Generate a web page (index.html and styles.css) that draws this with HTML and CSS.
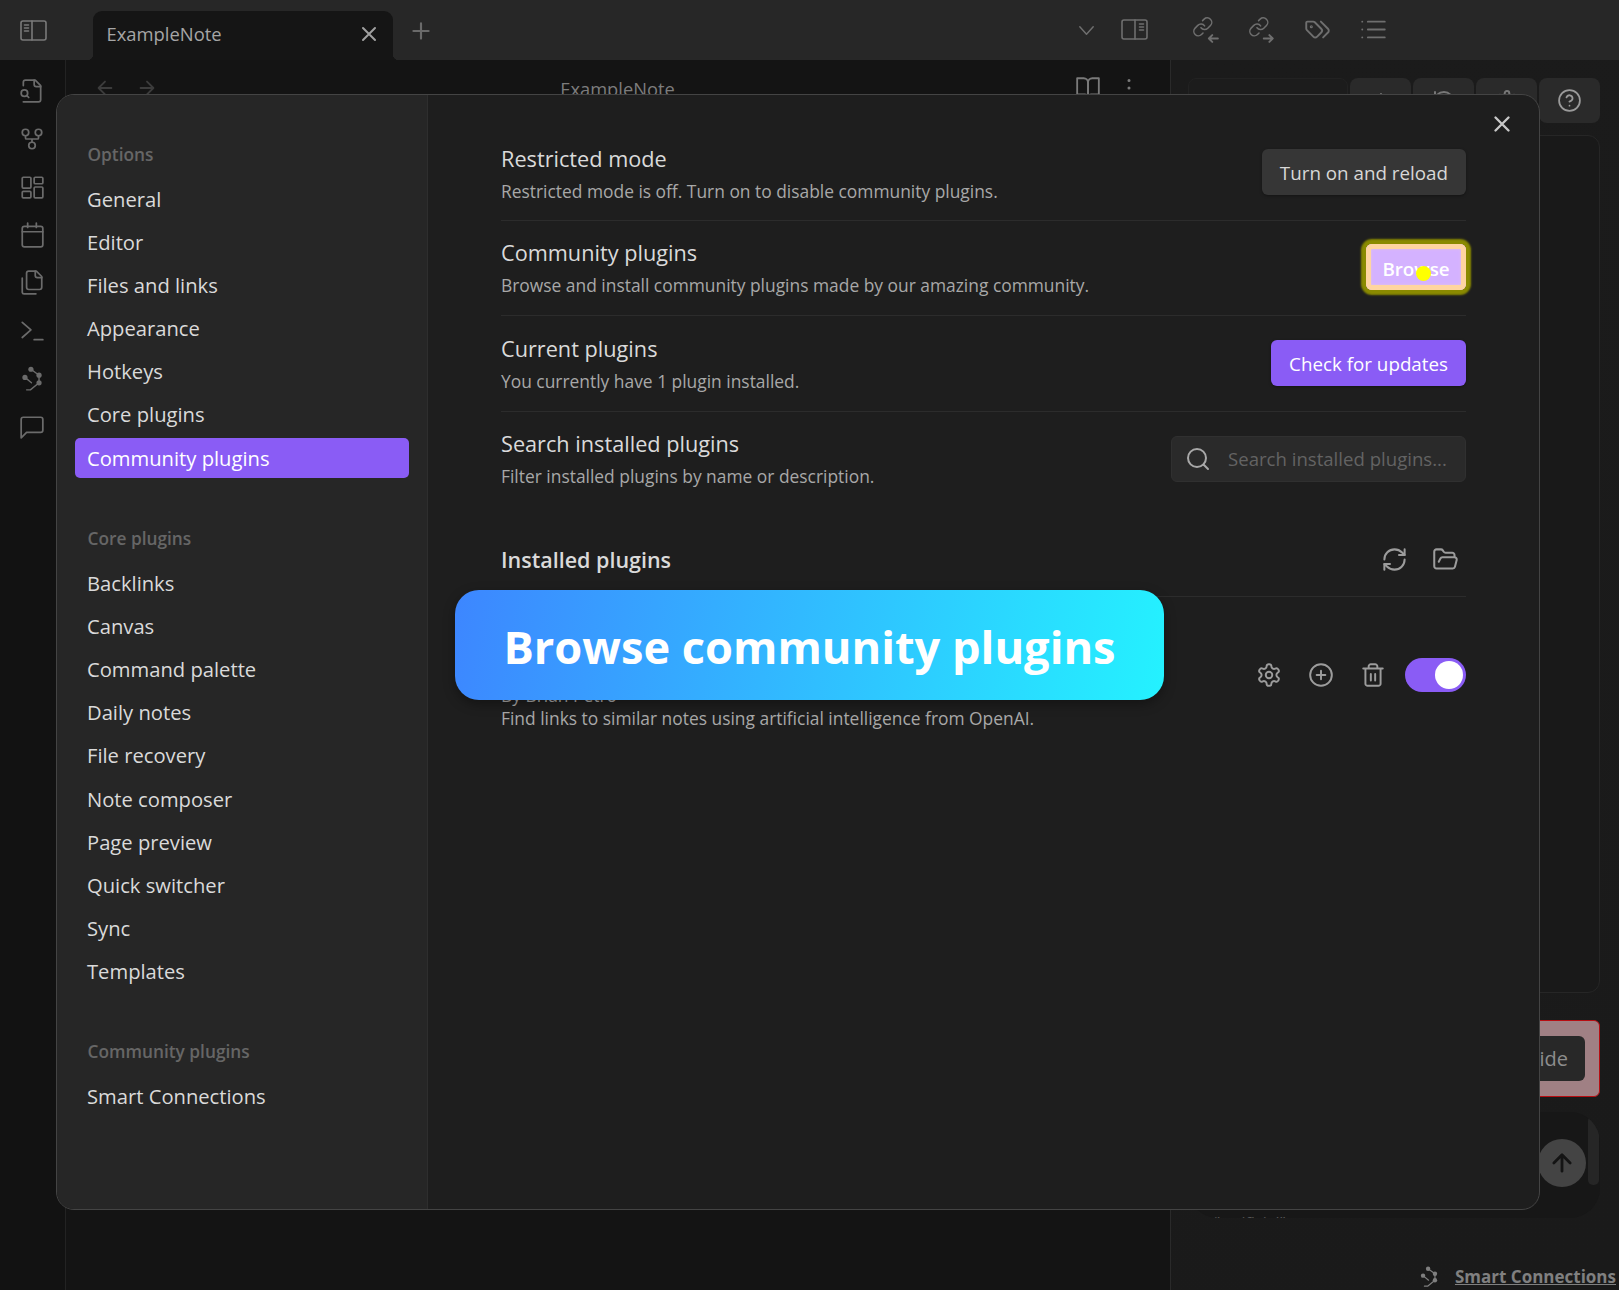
FILE: index.html
```html
<!DOCTYPE html>
<html lang="en">
<head>
<meta charset="utf-8">
<title>ExampleNote</title>
<link rel="stylesheet" href="styles.css">
</head>
<body>
<svg class="defs" aria-hidden="true">
  <defs>
    <symbol id="i-x" viewBox="0 0 24 24"><path d="M18 6 6 18M6 6l12 12"/></symbol>
    <symbol id="i-plus" viewBox="0 0 24 24"><path d="M5 12h14M12 5v14"/></symbol>
    <symbol id="i-graph" viewBox="0 0 24 24"><path d="M11 3 18.500 8.500v7L10.500 22H7M5.500 10.500l6 5"/><circle class="node-dot" cx="11" cy="3" r="2.400"/><circle class="node-dot" cx="18.500" cy="8.500" r="2.400"/><circle class="node-dot" cx="18.500" cy="15.500" r="2.400"/><circle class="node-dot" cx="5.500" cy="10.500" r="2.400"/></symbol>
    <symbol id="i-gear" viewBox="0 0 24 24"><path d="M12.220 2h-.44a2 2 0 0 0-2 2v.18a2 2 0 0 1-1 1.730l-.43.25a2 2 0 0 1-2 0l-.15-.08a2 2 0 0 0-2.730.73l-.22.38a2 2 0 0 0 .73 2.730l.15.1a2 2 0 0 1 1 1.720v.51a2 2 0 0 1-1 1.740l-.15.09a2 2 0 0 0-.73 2.730l.22.38a2 2 0 0 0 2.730.73l.15-.08a2 2 0 0 1 2 0l.43.25a2 2 0 0 1 1 1.730V20a2 2 0 0 0 2 2h.44a2 2 0 0 0 2-2v-.18a2 2 0 0 1 1-1.730l.43-.25a2 2 0 0 1 2 0l.15.08a2 2 0 0 0 2.730-.73l.22-.39a2 2 0 0 0-.73-2.730l-.15-.08a2 2 0 0 1-1-1.740v-.5a2 2 0 0 1 1-1.740l.15-.09a2 2 0 0 0 .73-2.730l-.22-.38a2 2 0 0 0-2.730-.73l-.15.08a2 2 0 0 1-2 0l-.43-.25a2 2 0 0 1-1-1.730V4a2 2 0 0 0-2-2z"/><circle cx="12" cy="12" r="3"/></symbol>
  </defs>
</svg>

<div class="app">
  <header class="topbar">
    <div class="top-left">
      <svg class="ic ic-sidebar" viewBox="0 0 27 21"><rect x="1" y="1" width="25" height="19" rx="2"/><path d="M12 1v19M4.500 5h4M4.500 8h4M4.500 11h4"/></svg>
    </div>
    <div class="tab">
      <span class="tab-title">ExampleNote</span>
      <svg class="ic ic-tabx"><use href="#i-x"/></svg>
    </div>
    <svg class="ic ic-newtab"><use href="#i-plus"/></svg>
    <div class="top-right">
      <svg class="ic ic-chev" viewBox="0 0 24 24"><path d="m5 8 7 8 7-8"/></svg>
      <svg class="ic ic-sidebar right-toggle" viewBox="0 0 27 21"><rect x="1" y="1" width="25" height="19" rx="2"/><path d="M14 1v19M18.500 5h4M18.500 8h4M18.500 11h4"/></svg>
      <div class="side-tabs">
        <svg class="ic ic-side" viewBox="0 0 24 24"><g transform="scale(.8)"><path d="M10 13a5 5 0 0 0 7.540.54l3-3a5 5 0 0 0-7.070-7.070l-1.720 1.710"/><path d="M14 11a5 5 0 0 0-7.540-.54l-3 3a5 5 0 0 0 7.070 7.070l1.710-1.710"/></g><path d="M23 20h-8m3-3-3 3 3 3"/></svg>
        <svg class="ic ic-side" viewBox="0 0 24 24"><g transform="scale(.8)"><path d="M10 13a5 5 0 0 0 7.540.54l3-3a5 5 0 0 0-7.070-7.070l-1.720 1.710"/><path d="M14 11a5 5 0 0 0-7.540-.54l-3 3a5 5 0 0 0 7.070 7.070l1.710-1.710"/></g><path d="M14 20h8m-3-3 3 3-3 3"/></svg>
        <svg class="ic ic-side" viewBox="0 0 24 24"><path d="m15 5 6.300 6.300a2.400 2.400 0 0 1 0 3.400L17 19"/><path d="M9.586 5.586A2 2 0 0 0 8.172 5H3a1 1 0 0 0-1 1v5.172a2 2 0 0 0 .586 1.414L8.290 18.290a2.426 2.426 0 0 0 3.420 0l3.580-3.580a2.426 2.426 0 0 0 0-3.420z"/><circle cx="6.500" cy="9.500" r=".5"/></svg>
        <svg class="ic ic-side" viewBox="0 0 24 24"><path d="M7 5h15M7 12h15M7 19h15M2 5h.01M2 12h.01M2 19h.01"/></svg>
      </div>
    </div>
  </header>

  <div class="workspace">
    <nav class="ribbon">
      <svg class="ic ic-rib" viewBox="0 0 24 24"><path d="M4 22h14a2 2 0 0 0 2-2V7l-5-5H6a2 2 0 0 0-2 2v3"/><path d="M14 2v4a2 2 0 0 0 2 2h4"/><path d="M5 17a3 3 0 1 0 0-6 3 3 0 0 0 0 6z"/><path d="m9 18-1.500-1.500"/></svg>
      <svg class="ic ic-rib" viewBox="0 0 24 24"><circle cx="12" cy="18" r="3"/><circle cx="6" cy="6" r="3"/><circle cx="18" cy="6" r="3"/><path d="M18 9v2c0 .6-.4 1-1 1H7c-.6 0-1-.4-1-1V9M12 12v3"/></svg>
      <svg class="ic ic-rib" viewBox="0 0 24 24"><rect x="3" y="3" width="8" height="10" rx="1"/><rect x="14" y="3" width="8" height="6" rx="1"/><rect x="14" y="12" width="8" height="10" rx="1"/><rect x="3" y="16" width="8" height="6" rx="1"/></svg>
      <svg class="ic ic-rib" viewBox="0 0 24 24"><rect x="3" y="4" width="19" height="19" rx="2"/><path d="M16 1v4M8 1v4M3 9h19"/></svg>
      <svg class="ic ic-rib" viewBox="0 0 24 24"><path d="M21 7h-4a2 2 0 0 1-2-2V1"/><path d="M9 18a2 2 0 0 1-2-2V3a2 2 0 0 1 2-2h7l5 5v10a2 2 0 0 1-2 2Z"/><path d="M3 7.600v13A1.600 1.600 0 0 0 4.600 22h11"/></svg>
      <svg class="ic ic-rib" viewBox="0 0 24 24"><path d="m3 4 8 7-8 7M14 20h8"/></svg>
      <svg class="ic ic-rib ic-graph"><use href="#i-graph"/></svg>
      <svg class="ic ic-rib" viewBox="0 0 24 24"><path d="M22 15a2 2 0 0 1-2 2H7l-5 5V5a2 2 0 0 1 2-2h16a2 2 0 0 1 2 2z"/></svg>
    </nav>

    <main class="note">
      <div class="note-head">
        <div class="note-nav">
          <svg class="ic ic-nav" viewBox="0 0 24 24"><path d="m12 19-7-7 7-7M19 12H5"/></svg>
          <svg class="ic ic-nav" viewBox="0 0 24 24"><path d="M5 12h14M12 5l7 7-7 7"/></svg>
        </div>
        <span class="note-title">ExampleNote</span>
        <div class="note-actions">
          <svg class="ic ic-note" viewBox="0 0 24 24"><path d="M2 3h6a4 4 0 0 1 4 4v14a3 3 0 0 0-3-3H2z"/><path d="M22 3h-6a4 4 0 0 0-4 4v14a3 3 0 0 1 3-3h7z"/></svg>
          <svg class="ic ic-note ic-dots" viewBox="0 0 24 24"><path d="M12 5h.01M12 12h.01M12 19h.01"/></svg>
        </div>
      </div>
    </main>

    <aside class="side">
      <div class="side-tools">
        <div class="side-field"></div>
        <div class="side-btn"><svg class="ic ic-tool"><use href="#i-plus"/></svg></div>
        <div class="side-btn"><svg class="ic ic-tool" viewBox="0 0 24 24"><path d="M3 12a9 9 0 1 0 9-9 9.750 9.750 0 0 0-6.740 2.740L3 8M3 3v5h5"/></svg></div>
        <div class="side-btn"><svg class="ic ic-tool"><use href="#i-gear"/></svg></div>
        <div class="side-btn"><svg class="ic ic-help" viewBox="0 0 24 24"><circle cx="12" cy="12" r="10"/><path d="M9.090 9a3 3 0 0 1 5.830 1c0 2-3 3-3 3M12 17h.01"/></svg></div>
      </div>
      <div class="side-panel"></div>
      <div class="side-alert"><button class="side-hide">Hide</button></div>
      <div class="chat">
        <p class="chat-hint">"artificial"</p>
        <div class="chat-send"><svg class="ic ic-send" viewBox="0 0 24 24"><path d="m5 12 7-7 7 7M12 19V5"/></svg></div>
        <div class="chat-scroll"></div>
      </div>
      <div class="side-foot">
        <svg class="ic ic-foot"><use href="#i-graph"/></svg>
        <a class="foot-link">Smart Connections</a>
      </div>
    </aside>
  </div>
</div>

<section class="modal">
  <aside class="m-side">
    <h3 class="m-group">Options</h3>
    <ul class="m-list">
      <li class="m-item">General</li>
      <li class="m-item">Editor</li>
      <li class="m-item">Files and links</li>
      <li class="m-item">Appearance</li>
      <li class="m-item">Hotkeys</li>
      <li class="m-item">Core plugins</li>
      <li class="m-item is-active">Community plugins</li>
    </ul>
    <h3 class="m-group">Core plugins</h3>
    <ul class="m-list">
      <li class="m-item">Backlinks</li>
      <li class="m-item">Canvas</li>
      <li class="m-item">Command palette</li>
      <li class="m-item">Daily notes</li>
      <li class="m-item">File recovery</li>
      <li class="m-item">Note composer</li>
      <li class="m-item">Page preview</li>
      <li class="m-item">Quick switcher</li>
      <li class="m-item">Sync</li>
      <li class="m-item">Templates</li>
    </ul>
    <h3 class="m-group">Community plugins</h3>
    <ul class="m-list">
      <li class="m-item">Smart Connections</li>
    </ul>
  </aside>

  <div class="m-body">
    <svg class="ic ic-close"><use href="#i-x"/></svg>

    <div class="row">
      <div class="row-info">
        <div class="row-title">Restricted mode</div>
        <div class="row-desc">Restricted mode is off. Turn on to disable community plugins.</div>
      </div>
      <button class="btn">Turn on and reload</button>
    </div>
    <div class="row">
      <div class="row-info row-info-up">
        <div class="row-title">Community plugins</div>
        <div class="row-desc">Browse and install community plugins made by our amazing community.</div>
      </div>
      <button class="btn btn-browse">Browse<span class="cursor-dot"></span></button>
    </div>
    <div class="row">
      <div class="row-info row-info-up3">
        <div class="row-title">Current plugins</div>
        <div class="row-desc">You currently have 1 plugin installed.</div>
      </div>
      <button class="btn btn-cta">Check for updates</button>
    </div>
    <div class="row row-plain">
      <div class="row-info row-info-up2">
        <div class="row-title">Search installed plugins</div>
        <div class="row-desc">Filter installed plugins by name or description.</div>
      </div>
      <div class="search">
        <svg class="ic ic-search" viewBox="0 0 24 24"><circle cx="11" cy="11" r="9"/><path d="m22 22-4.500-4.500"/></svg>
        <span class="search-ph">Search installed plugins...</span>
      </div>
    </div>

    <div class="heading">
      <span class="heading-title">Installed plugins</span>
      <div class="heading-icons">
        <svg class="ic ic-act" viewBox="0 0 24 24"><path d="M3 12a9 9 0 0 1 9-9 9.750 9.750 0 0 1 6.740 2.740L21 8"/><path d="M21 3v5h-5"/><path d="M21 12a9 9 0 0 1-9 9 9.750 9.750 0 0 1-6.740-2.740L3 16"/><path d="M8 16H3v5"/></svg>
        <svg class="ic ic-act" viewBox="0 0 24 24"><path d="m6 14 1.500-2.900A2 2 0 0 1 9.240 10H20a2 2 0 0 1 1.940 2.500l-1.540 6a2 2 0 0 1-1.950 1.500H4a2 2 0 0 1-2-2V5a2 2 0 0 1 2-2h3.900a2 2 0 0 1 1.690.9l.81 1.200a2 2 0 0 0 1.670.9H18a2 2 0 0 1 2 2v2"/></svg>
      </div>
    </div>

    <div class="plugin">
      <div class="plugin-info">
        <div class="row-title">Smart Connections</div>
        <div class="row-desc plugin-by">By Brian Petro</div>
        <div class="row-desc">Find links to similar notes using artificial intelligence from OpenAI.</div>
      </div>
      <div class="plugin-controls">
        <svg class="ic ic-ctl"><use href="#i-gear"/></svg>
        <svg class="ic ic-ctl" viewBox="0 0 24 24"><circle cx="12" cy="12" r="10"/><path d="M8 12h8M12 8v8"/></svg>
        <svg class="ic ic-ctl" viewBox="0 0 24 24"><path d="M3 6h18M19 6v14c0 1-1 2-2 2H7c-1 0-2-1-2-2V6M8 6V4c0-1 1-2 2-2h4c1 0 2 1 2 2v2M10 11v6M14 11v6"/></svg>
        <div class="toggle"><span class="knob"></span></div>
      </div>
    </div>
  </div>
</section>

<div class="toast">Browse community plugins</div>
</body>
</html>
```

FILE: styles.css
```css
* { box-sizing: border-box; }
html, body { margin: 0; height: 100%; }
body {
  width: 1619px;
  height: 1290px;
  overflow: hidden;
  position: relative;
  background: #141414;
  font-family: "Open Sans", "Noto Sans", "Liberation Sans", sans-serif;
  font-stretch: 92%;
  color: #dadada;
}
.defs { position: absolute; width: 0; height: 0; }
.ic {
  display: block;
  fill: none;
  stroke: currentColor;
  stroke-width: 2;
  stroke-linecap: round;
  stroke-linejoin: round;
  flex: none;
}
.node-dot { fill: currentColor; stroke: none; }

.app { display: flex; flex-direction: column; height: 1290px; }

/* top bar */
.topbar {
  display: flex;
  align-items: flex-end;
  height: 60px;
  background: #272727;
  flex: none;
}
.top-left { width: 93px; height: 60px; padding: 20px 0 0 20px; color: #7a7a7a; }
.ic-sidebar { width: 27px; height: 21px; stroke-width: 1.6; }
.tab {
  position: relative;
  width: 300px;
  height: 49px;
  background: #151515;
  border-radius: 9px 9px 0 0;
  display: flex;
  align-items: center;
  justify-content: space-between;
  padding: 0 12px 4px 13.500px;
}
.tab::before, .tab::after {
  content: "";
  position: absolute;
  bottom: 0;
  width: 6px;
  height: 6px;
}
.tab::before { left: -6px; background: radial-gradient(circle at 0 0, #272727 6px, #151515 6.500px); }
.tab::after { right: -6px; background: radial-gradient(circle at 100% 0, #272727 6px, #151515 6.500px); }
.tab-title { font-size: 18.400px; color: #a6a6a6; }
.ic-tabx { width: 24px; height: 24px; color: #a0a0a0; }
.ic-newtab { width: 26px; height: 26px; color: #6a6a6a; margin: 0 0 16px 15px; }
.top-right {
  margin-left: auto;
  height: 60px;
  display: flex;
  align-items: center;
  padding-right: 232.500px;
  color: #6f6f6f;
}
.ic-chev { width: 23px; height: 23px; margin-right: 23.500px; stroke-width: 1.500; }
.right-toggle { margin-bottom: 2px; }
.side-tabs { display: flex; gap: 29px; margin-left: 43.500px; margin-bottom: 2px; }
.ic-side { width: 27px; height: 27px; stroke-width: 1.700; }

/* workspace */
.workspace { flex: 1; display: flex; min-height: 0; }
.ribbon {
  width: 66px;
  flex: none;
  background: #121212;
  border-right: 1px solid #232323;
  display: flex;
  flex-direction: column;
  align-items: center;
  padding-top: 18px;
  gap: 22px;
  color: #6b6b6b;
}
.ic-rib { width: 26px; height: 26px; margin-left: -1px; stroke-width: 1.600; }
.ic-graph { stroke-width: 1.300; }

.note { flex: 1; background: #141414; min-width: 0; }
.note-head {
  display: flex;
  align-items: center;
  justify-content: space-between;
  height: 56px;
  padding: 0 28px 0 28px;
}
.note-nav { display: flex; gap: 20px; color: #3c3c3c; }
.ic-nav { width: 22px; height: 22px; }
.note-title { font-size: 18.300px; color: #7d7d7d; margin-left: 2px; }
.note-actions { display: flex; gap: 15px; color: #7a7a7a; }
.ic-note { width: 26px; height: 26px; stroke-width: 1.700; }
.ic-dots { stroke-width: 2.800; }

/* side pane */
.side {
  width: 449px;
  flex: none;
  background: linear-gradient(160deg, #1b1b1b, #1a1a1a);
  border-left: 1px solid #2a2a2a;
  padding: 18px 19px 0 17px;
  display: flex;
  flex-direction: column;
}
.side-tools { display: flex; gap: 2px; height: 45px; margin-bottom: 12px; }
.side-field { flex: 1; background: #1c1c1c; border: 1px solid #222; border-radius: 8px; }
.side-btn {
  width: 61px;
  background: #2a2a2a;
  border-radius: 8px;
  display: flex;
  align-items: center;
  justify-content: center;
  color: #777;
}
.ic-tool { width: 24px; height: 24px; }
.ic-help { width: 25px; height: 25px; color: #9a9a9a; stroke-width: 1.700; }
.side-panel {
  height: 858px;
  border: 1px solid #262626;
  border-radius: 12px;
  background: #191919;
  margin-bottom: 27px;
}
.side-alert {
  height: 77px;
  background: #a08084;
  border: 1px solid #b80d12;
  border-radius: 6px;
  padding: 15px 14px;
  display: flex;
  justify-content: flex-end;
  margin-bottom: 15px;
}
.side-hide {
  height: 45px;
  padding: 0 17px;
  border: 0;
  border-radius: 6px;
  background: #282828;
  color: #8d8d8d;
  font: inherit;
  font-size: 20px;
}
.chat {
  position: relative;
  height: 106px;
  background: #171717;
  border-radius: 30px;
  overflow: hidden;
}
.chat-hint {
  position: absolute;
  left: 26px;
  top: 100px;
  margin: 0;
  color: #555;
  font-size: 16px;
  white-space: nowrap;
}
.chat-send {
  position: absolute;
  right: 14px;
  top: 27px;
  width: 48px;
  height: 48px;
  border-radius: 50%;
  background: #444;
  display: flex;
  align-items: center;
  justify-content: center;
  color: #141414;
}
.ic-send { width: 28px; height: 28px; stroke-width: 2.400; }
.chat-scroll {
  position: absolute;
  right: 1px;
  top: 4px;
  width: 11px;
  height: 69px;
  border-radius: 5px;
  background: #262626;
}
.side-foot {
  display: flex;
  align-items: center;
  justify-content: flex-end;
  gap: 15px;
  margin: 47px -16px 0 0;
  color: #7f7f7f;
}
.ic-foot { width: 22px; height: 22px; stroke-width: 1.300; }
.foot-link { font-size: 17px; font-weight: 700; text-decoration: underline; color: #808080; }

/* modal */
.modal {
  position: absolute;
  left: 56px;
  top: 94px;
  width: 1484px;
  height: 1116px;
  display: flex;
  border: 1px solid #444;
  border-radius: 18px;
  overflow: hidden;
  background: #1e1e1e;
}
.m-side {
  width: 371px;
  flex: none;
  background: #262626;
  border-right: 1px solid #2e2e2e;
  padding: 45px 18px 0 18px;
}
.m-group {
  margin: 0 0 9px;
  height: 30px;
  line-height: 30px;
  padding-left: 12.500px;
  font-size: 17.300px;
  font-weight: 600;
  color: #666;
}
.m-list {
  list-style: none;
  margin: 0 0 46.500px;
  padding: 0;
  display: flex;
  flex-direction: column;
  gap: 3.100px;
}
.m-item {
  height: 40px;
  line-height: 40px;
  padding-left: 12px;
  font-size: 20.200px;
  color: #dadada;
  border-radius: 5px;
}
.is-active { background: #8a5cf5; color: #fff; }

.m-body { position: relative; flex: 1; padding: 30px 73px 0 73px; }
.ic-close { position: absolute; right: 24px; top: 16px; width: 26px; height: 26px; color: #c8c8c8; stroke-width: 2.200; }
.row {
  display: flex;
  align-items: center;
  justify-content: space-between;
  height: 95.500px;
  padding: 12px 0 13.500px;
  border-bottom: 1px solid #2c2c2c;
}
.row-plain { border-bottom: 0; }
.row-info { padding-top: 7px; }
.row-info-up { margin-top: -3px; }
.row-info-up2 { margin-top: -5px; }
.row-info-up3 { margin-top: -2px; }
.row-title { font-size: 21.700px; line-height: 30px; color: #dadada; margin-bottom: 2px; }
.row-desc { font-size: 17.400px; line-height: 30px; color: #a8a8a8; }
.btn {
  height: 46px;
  padding: 3px 18px 0;
  border: 0;
  border-radius: 6px;
  background: #363636;
  color: #d8d8d8;
  font: inherit;
  font-size: 18.800px;
  box-shadow: 0 1px 3px rgba(0, 0, 0, .35);
}
.btn-cta { background: #8a5cf5; color: #fff; }
.btn-browse {
  position: relative;
  width: 100px;
  padding: 3px 0 0;
  background: #d4b2ff;
  color: #fff;
  font-weight: 600;
  box-shadow: inset 0 0 0 5px #ffd5a0, inset 0 0 2px 6px #dcbcf0, 0 0 2px 5px #8a8a00;
}
.cursor-dot {
  position: absolute;
  left: 50px;
  top: 22px;
  width: 15px;
  height: 15px;
  border-radius: 50%;
  background: #ffff00;
}
.search {
  width: 295px;
  height: 46px;
  display: flex;
  align-items: center;
  gap: 18px;
  padding-left: 14px;
  background: #2a2a2a;
  border: 1px solid #303030;
  border-radius: 6px;
}
.ic-search { width: 24px; height: 24px; color: #a8a8a8; }
.search-ph { font-size: 18.600px; color: #636363; white-space: nowrap; }

.heading {
  display: flex;
  align-items: center;
  justify-content: space-between;
  height: 90px;
  margin-top: 0;
  padding-top: 15px;
  border-bottom: 1px solid #2c2c2c;
}
.heading-title { font-size: 21.500px; font-weight: 600; color: #dadada; }
.heading-icons { display: flex; gap: 24.500px; color: #a0a0a0; padding: 0 7px 0 0; }
.ic-act { width: 27px; height: 27px; color: #9c9c9c; stroke-width: 1.800; }
.ic-ctl { width: 26px; height: 26px; color: #9c9c9c; stroke-width: 1.800; }

.plugin {
  display: flex;
  align-items: center;
  justify-content: space-between;
  height: 150px;
}
.plugin-info { padding-top: 36px; }
.plugin-by { margin-bottom: -7px; }
.plugin-controls { display: flex; align-items: center; gap: 26px; margin-top: 6px; }
.toggle {
  width: 61px;
  height: 34px;
  background: #8a5cf5;
  border-radius: 17px;
  display: flex;
  justify-content: flex-end;
  align-items: center;
  padding-right: 3px;
  margin-left: -7px;
}
.knob { width: 28px; height: 28px; border-radius: 50%; background: #fff; }

/* callout */
.toast {
  position: absolute;
  left: 455px;
  top: 590px;
  width: 709px;
  height: 110px;
  display: flex;
  align-items: center;
  justify-content: center;
  padding-top: 2px;
  border-radius: 24px;
  background: linear-gradient(100deg, #3d86ff, #24f2ff);
  box-shadow: 0 4px 12px rgba(0, 0, 0, .35);
  color: #fff;
  font-size: 45.200px;
  font-weight: 700;
}
```
